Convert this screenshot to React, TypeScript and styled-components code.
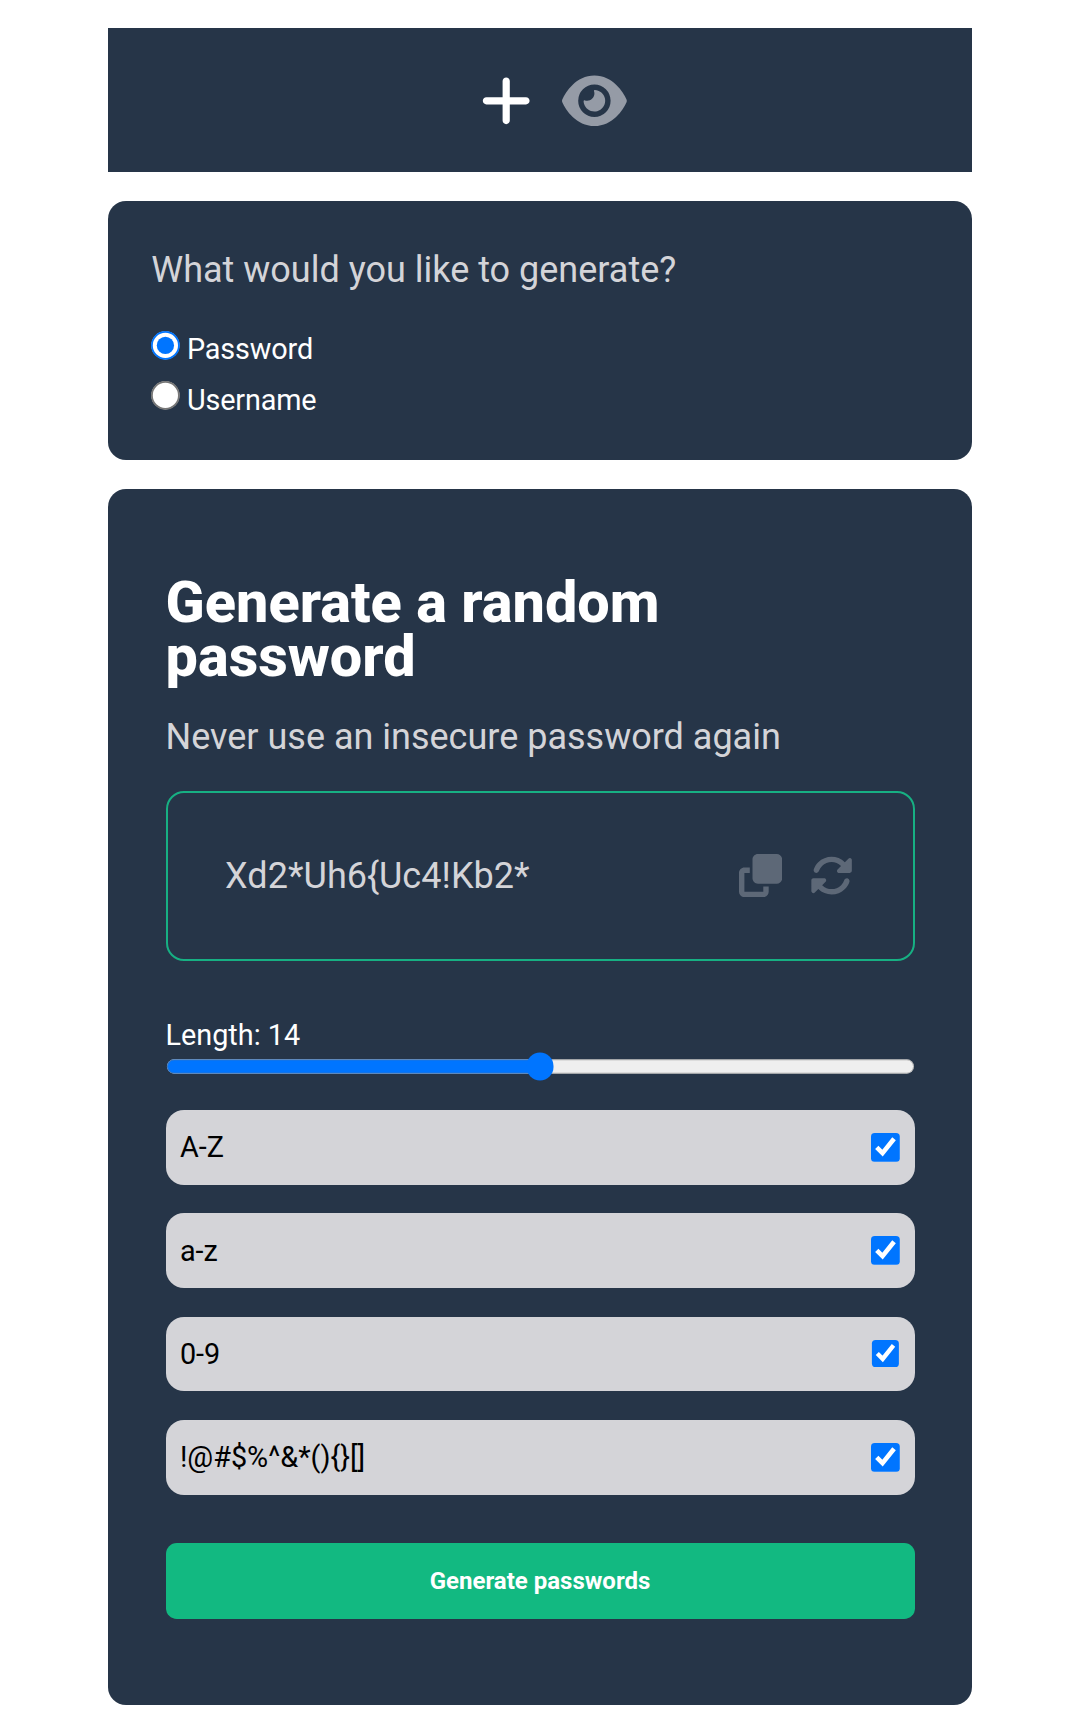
import React, { useState } from "react";
import styled, { createGlobalStyle } from "styled-components";
import { FaPlus, FaEye, FaClone, FaRotate } from "react-icons/fa6";

const GlobalStyle = createGlobalStyle`
  *, *::before, *::after { box-sizing: border-box; }
  body {
    margin: 0;
    background: #fff;
    color: #fff;
    font-family: Roboto, "Liberation Sans", sans-serif;
    font-size: 28.8px;
  }
  h1, p { margin: 0; }
`;

const Page = styled.main`
  width: 864px;
  margin: 0 auto;
  padding: 28.4px 0 25px;
  display: flex;
  flex-direction: column;
  gap: 28.8px;
`;

const Nav = styled.nav`
  height: 143.8px;
  padding: 1.4px 0 0 28px;
  display: flex;
  align-items: center;
  justify-content: center;
  gap: 30.4px;
  background: #263548;
`;

const NavItem = styled.a<{ $width: number; $active?: boolean }>`
  display: flex;
  color: ${(p) => (p.$active ? "#fff" : "#959ba6")};

  svg {
    width: ${(p) => p.$width}px;
    height: 57.6px;
  }
`;

const Card = styled.section<{ $pad: string; $height: number }>`
  height: ${(p) => p.$height}px;
  padding: ${(p) => p.$pad};
  border-radius: 18px;
  background: #263548;
`;

const Lead = styled.p`
  font-size: 36px;
  line-height: 44px;
  color: #d4d4d8;
`;

const Choices = styled.div`
  margin-top: 35.6px;
  display: flex;
  flex-direction: column;
`;

const Choice = styled.label`
  height: 50.7px;
  display: flex;
  align-items: flex-start;
  gap: 7px;
  line-height: 44px;
  letter-spacing: -0.15px;
`;

const Radio = styled.input.attrs({ type: "radio" })`
  zoom: 1.8;
  width: 16px;
  height: 16px;
  margin: 2px 0 0;
`;

const Title = styled.h1`
  font-size: 57.6px;
  line-height: 54px;
  font-weight: 800;
  margin-bottom: 31.6px;
`;

const Output = styled.div`
  height: 170px;
  margin-top: 31.4px;
  padding: 0 59.4px 0 57.6px;
  display: flex;
  align-items: center;
  justify-content: space-between;
  border: 2px solid #17b083;
  border-radius: 18px;
`;

const Secret = styled.span`
  font-size: 36px;
  letter-spacing: 0.06px;
  color: #d4d4d8;
`;

const Actions = styled.div`
  display: flex;
  gap: 28px;
  font-size: 43.2px;
  color: #5d6877;
`;

const LengthField = styled.label`
  margin-top: 57px;
  display: flex;
  flex-direction: column;
  line-height: 34px;
`;

const Range = styled.input.attrs({ type: "range" })`
  zoom: 1.8;
  width: 100%;
  height: 16px;
  margin: 0;
`;

const Options = styled.div`
  margin-top: 29.4px;
  display: flex;
  flex-direction: column;
  gap: 28.8px;
`;

const Option = styled.label`
  height: 74.6px;
  padding: 0 14.4px;
  display: flex;
  align-items: center;
  justify-content: space-between;
  border-radius: 18px;
  background: #d4d4d8;
  color: #000;
`;

const Check = styled.input.attrs({ type: "checkbox" })`
  zoom: 1.8;
  width: 16px;
  height: 16px;
  margin: 0;
`;

const Submit = styled.button`
  width: 100%;
  height: 76.3px;
  margin-top: 48px;
  border: 0;
  border-radius: 10.8px;
  background: #12b981;
  color: #fff;
  font: 700 24px Roboto, sans-serif;
`;

const kinds = ["Password", "Username"];
const charsets = ["A-Z", "a-z", "0-9", "!@#$%^&*(){}[]"];

export default function App() {
  const [kind, setKind] = useState("Password");
  const [length, setLength] = useState(14);

  return (
    <>
      <GlobalStyle />
      <Page>
        <Nav>
          <NavItem $active $width={50.4}>
            <FaPlus />
          </NavItem>
          <NavItem $width={64.8}>
            <FaEye />
          </NavItem>
        </Nav>

        <Card $height={259} $pad="46.6px 43.2px 0">
          <Lead>What would you like to generate?</Lead>
          <Choices>
            {kinds.map((k) => (
              <Choice key={k}>
                <Radio name="kind" checked={kind === k} onChange={() => setKind(k)} />
                {k}
              </Choice>
            ))}
          </Choices>
        </Card>

        <Card $height={1216} $pad="87px 57.5px 0">
          <Title>
            Generate a random
            <br />
            password
          </Title>
          <Lead>Never use an insecure password again</Lead>
          <Output>
            <Secret>{"Xd2*Uh6{Uc4!Kb2*"}</Secret>
            <Actions>
              <FaClone />
              <FaRotate />
            </Actions>
          </Output>
          <LengthField>
            <span>Length: {length}</span>
            <Range min={4} max={24} value={length} onChange={(e) => setLength(Number(e.target.value))} />
          </LengthField>
          <Options>
            {charsets.map((c) => (
              <Option key={c}>
                {c}
                <Check defaultChecked />
              </Option>
            ))}
          </Options>
          <Submit>Generate passwords</Submit>
        </Card>
      </Page>
    </>
  );
}
